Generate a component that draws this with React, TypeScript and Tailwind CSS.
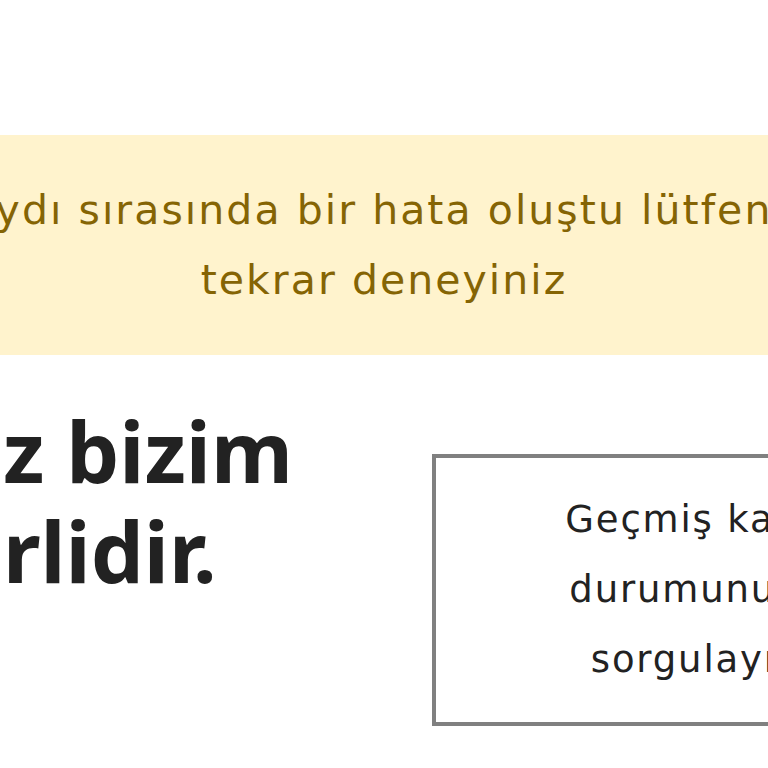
export default function App() {
  return (
    <div className="w-[768px] h-[768px] overflow-hidden bg-white font-['Noto_Sans',sans-serif]">
      {/* Alert band */}
      <div className="mt-[135px] h-[220px] bg-[#fff3cd] text-[#856404] flex flex-col items-center justify-center text-center font-['DejaVu_Sans',sans-serif] text-[41px] tracking-[0.05em] leading-[70px] whitespace-nowrap">
        <p>ydı sırasında bir hata oluştu lütfen</p>
        <p>tekrar deneyiniz</p>
      </div>

      {/* Content row */}
      <div className="flex whitespace-nowrap">
        <div className="w-[432px] shrink-0 pt-[46px] pl-[3px]">
          <h1 className="text-[84px] leading-[100px] font-bold text-[#222222]">
            z bizim
            <br />
            rlidir.
          </h1>
        </div>
        <div className="mt-[99px] shrink-0 w-[528px] h-[272px] border-4 border-[#808080] flex flex-col items-center justify-center text-center font-['DejaVu_Sans',sans-serif] text-[37px] tracking-[0.05em] leading-[70px] text-[#222222]">
          <p>Geçmiş kayıt</p>
          <p>durumunuzu</p>
          <p>sorgulayın</p>
        </div>
      </div>
    </div>
  );
}
